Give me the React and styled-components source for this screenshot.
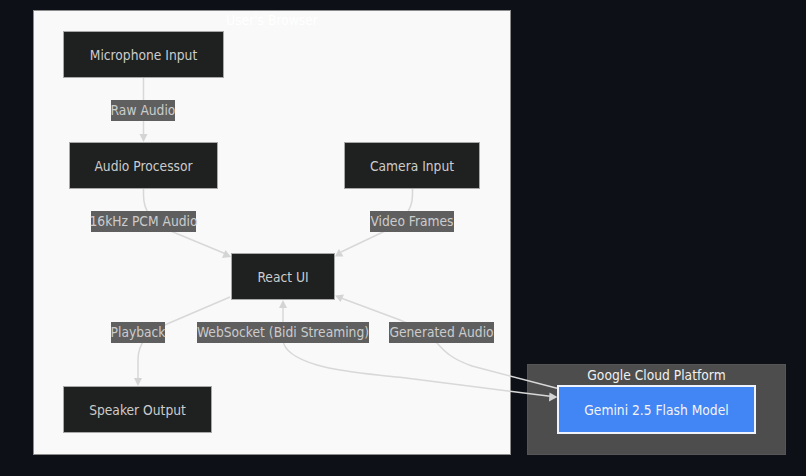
import React from 'react';
import styled, { createGlobalStyle } from 'styled-components';

const GlobalStyle = createGlobalStyle`
    html,
    body {
        margin: 0;
        padding: 0;
        background: #0d1117;
    }
`;

const Canvas = styled.div`
    position: relative;
    width: 806px;
    height: 476px;
    overflow: hidden;
    background: #0d1117;
    font-family: 'DejaVu Sans Condensed', 'DejaVu Sans', sans-serif;
    font-size: 13.7px;
`;

// Clusters, nodes and edge labels sit on the free canvas of the diagram
const BrowserCluster = styled.div`
    position: absolute;
    left: 33px;
    top: 10px;
    width: 478px;
    height: 445px;
    box-sizing: border-box;
    display: flex;
    justify-content: center;
    background: #f9f9f9;
    border: 1px solid #8c8c8c;
`;

const CloudCluster = styled.div`
    position: absolute;
    left: 527px;
    top: 364px;
    width: 259px;
    height: 91px;
    box-sizing: border-box;
    display: flex;
    flex-direction: column;
    align-items: center;
    background: #4d4d4d;
    border: 1px solid #555;
`;

const ClusterTitle = styled.span`
    color: ${p => p.$color};
    line-height: ${p => p.$lineHeight}px;
    white-space: nowrap;
`;

const Node = styled.div`
    position: absolute;
    left: ${p => p.$x}px;
    top: ${p => p.$y}px;
    width: ${p => p.$w}px;
    height: 47px;
    box-sizing: border-box;
    display: flex;
    align-items: center;
    justify-content: center;
    background: #1f2020;
    border: 1px solid #a8a8a8;
    color: #ccc;
    white-space: nowrap;
`;

const ModelNode = styled.div`
    width: 199px;
    height: 49px;
    box-sizing: border-box;
    display: flex;
    align-items: center;
    justify-content: center;
    background: #4285f4;
    border: 2px solid #eef3fc;
    color: #f4f4f4;
`;

const EdgeLabel = styled.div`
    position: absolute;
    left: ${p => p.$x}px;
    top: ${p => p.$y}px;
    width: ${p => p.$w}px;
    height: 21px;
    box-sizing: border-box;
    padding-bottom: 2px;
    display: flex;
    align-items: center;
    justify-content: center;
    background: #5f5f5f;
    color: #ccc;
    white-space: nowrap;
`;

const Edges = styled.svg`
    position: absolute;
    left: 0;
    top: 0;
`;

const EdgePath = styled.path`
    fill: none;
    stroke: #d8d8d8;
    stroke-width: 1.5;
`;

const nodes = [
    { label: 'Microphone Input', x: 63, y: 31, w: 161 },
    { label: 'Audio Processor', x: 69, y: 142, w: 149 },
    { label: 'Camera Input', x: 344, y: 142, w: 136 },
    { label: 'React UI', x: 231, y: 253, w: 104 },
    { label: 'Speaker Output', x: 63, y: 386, w: 149 },
];

const labels = [
    { label: 'Raw Audio', x: 111, y: 100, w: 64 },
    { label: '16kHz PCM Audio', x: 91, y: 211, w: 105 },
    { label: 'Video Frames', x: 370, y: 211, w: 84 },
    { label: 'Playback', x: 111, y: 322, w: 54 },
    { label: 'WebSocket (Bidi Streaming)', x: 197, y: 322, w: 172 },
    { label: 'Generated Audio', x: 389, y: 322, w: 105 },
];

const edges = [
    'M143.5 78V136',
    'M143.5 189V195C143.5 212 152 222 173 232L226 254',
    'M412.5 189V195C412.5 210 402 223 383 232L341 252',
    'M230 297L167 324C148 333 138 342 138 360V380',
    'M283 306V340C284 352 300 360 317 365C345 373 372 374 400 377.3L552 396.5',
    'M341 298L400 320C420 328 430 336 437 343C445 352 452 359 472 366L557 388.3',
];

const arrows = [
    '143.5,142 139.5,134 147.5,134',
    '231,257 222,258 225.5,250',
    '335,256.5 339,249 343.5,256.5',
    '138,386 134,378 142,378',
    '283,300 279,308 287,308',
    '335,295.5 344,294.5 340.5,302',
    '557.5,397 549,401.5 549.5,392.5',
];

const App = () => (
    <Canvas>
        <GlobalStyle />
        <BrowserCluster>
            <ClusterTitle $color="#fff" $lineHeight={18}>
                User's Browser
            </ClusterTitle>
        </BrowserCluster>
        <CloudCluster>
            <ClusterTitle $color="#f0f0f0" $lineHeight={20}>
                Google Cloud Platform
            </ClusterTitle>
            <ModelNode>Gemini 2.5 Flash Model</ModelNode>
        </CloudCluster>
        <Edges width="806" height="476" viewBox="0 0 806 476">
            {edges.map(d => (
                <EdgePath key={d} d={d} />
            ))}
            {arrows.map(points => (
                <polygon key={points} points={points} fill="#d4d4d4" />
            ))}
        </Edges>
        {labels.map(({ label, x, y, w }) => (
            <EdgeLabel key={label} $x={x} $y={y} $w={w}>
                {label}
            </EdgeLabel>
        ))}
        {nodes.map(({ label, x, y, w }) => (
            <Node key={label} $x={x} $y={y} $w={w}>
                {label}
            </Node>
        ))}
    </Canvas>
);

export default App;
